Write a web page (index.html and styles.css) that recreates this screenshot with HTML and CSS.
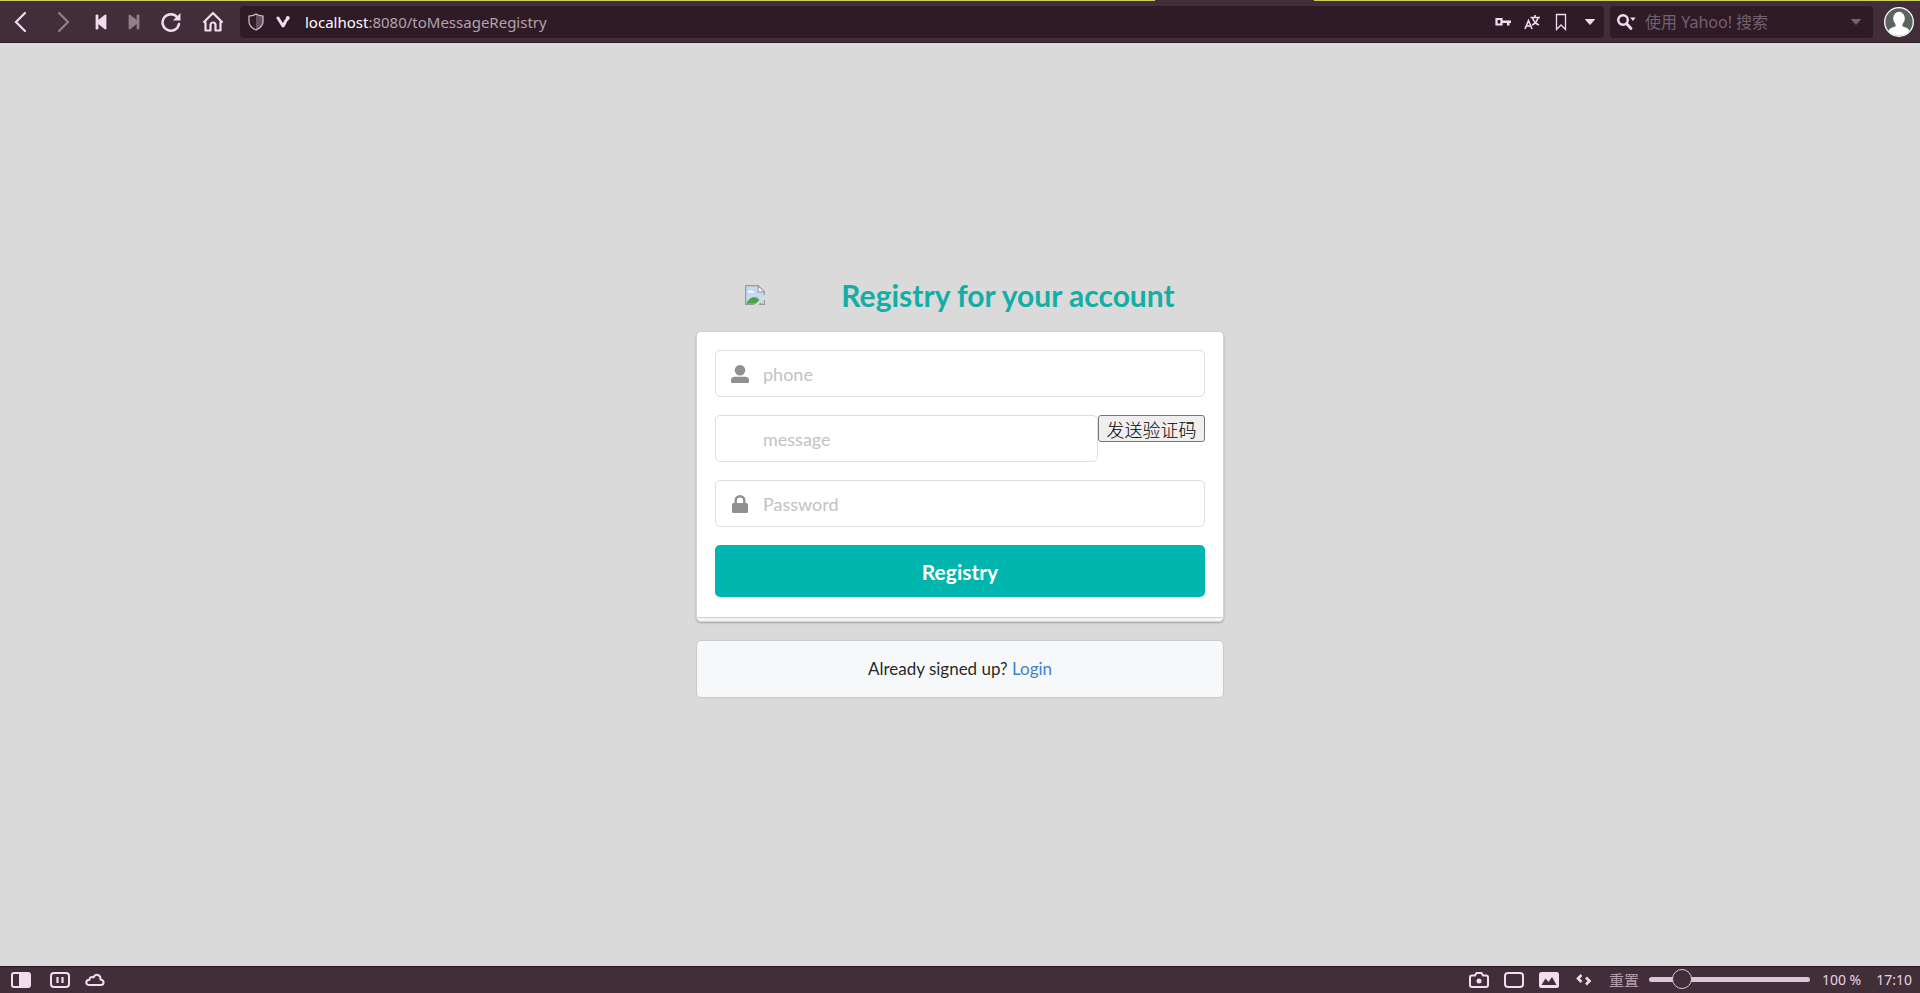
FILE: index.html
```html
<!DOCTYPE html>
<html lang="zh-CN">
<head>
  <meta charset="UTF-8"/>
  <meta name="viewport" content="width=device-width, initial-scale=1.0"/>
  <title>Registry</title>
  <link rel="stylesheet" href="styles.css">
</head>
<body>

  <!-- Browser toolbar -->
  <div class="tab-line"><span class="tab-active"></span></div>
  <header class="toolbar">
    <nav class="nav-buttons">
      <button class="nav-btn" type="button" aria-label="Back">
        <svg width="22" height="22" viewBox="0 0 22 22"><path d="M15 2 6 11l9 9" fill="none" stroke="currentColor" stroke-width="2.2" stroke-linecap="round"/></svg>
      </button>
      <button class="nav-btn dim" type="button" aria-label="Forward">
        <svg width="22" height="22" viewBox="0 0 22 22"><path d="m7 2 9 9-9 9" fill="none" stroke="currentColor" stroke-width="2.2" stroke-linecap="round"/></svg>
      </button>
      <button class="nav-btn narrow" type="button" aria-label="Rewind">
        <svg width="12" height="16" viewBox="0 0 12 16"><path d="M1 1h2v5.6L10 1h1v14h-1L3 9.4V15H1z" fill="currentColor" stroke="currentColor" stroke-width=".8" stroke-linejoin="round"/></svg>
      </button>
      <button class="nav-btn narrow dim" type="button" aria-label="Fast forward">
        <svg width="12" height="16" viewBox="0 0 12 16"><path d="M11 1H9v5.6L2 1H1v14h1l7-5.600V15h2z" fill="currentColor" stroke="currentColor" stroke-width=".8" stroke-linejoin="round"/></svg>
      </button>
      <button class="nav-btn" type="button" aria-label="Reload">
        <svg width="22" height="22" viewBox="0 0 22 22"><path d="M17.500 6.500A8.300 8.300 0 1 0 19 13" fill="none" stroke="currentColor" stroke-width="2.500" stroke-linecap="round"/><path d="M20.500 2v7.500H13z" fill="currentColor"/></svg>
      </button>
      <button class="nav-btn" type="button" aria-label="Home">
        <svg width="22" height="22" viewBox="0 0 22 22"><path d="m2 11 9-9 9 9h-1.500v8.500h-5V14a2.500 2.500 0 0 0-5 0v5.500h-5V11z" fill="none" stroke="currentColor" stroke-width="2.200" stroke-linejoin="round"/></svg>
      </button>
    </nav>

    <div class="address-bar">
      <svg class="shield" width="16" height="18" viewBox="0 0 16 18"><path d="M8 1c2 1.200 4 2 7 2v6c0 3.500-3 6-7 8z" fill="#655260"/><path d="M8 1c2 1.200 4 2 7 2v6c0 3.500-3 6-7 8-4-2-7-4.500-7-8V3c3 0 5-.8 7-2z" fill="none" stroke="#d9c3d4" stroke-width="1.200"/></svg>
      <svg class="vivaldi" width="14" height="14" viewBox="0 0 14 14"><path d="m2 3 5 8c2-2.500 2-5.500 4.500-7" fill="none" stroke="currentColor" stroke-width="3" stroke-linecap="round" stroke-linejoin="round"/><circle cx="11.800" cy="2.800" r="1.900" fill="currentColor"/></svg>
      <div class="url"><b>localhost</b>:8080/toMessageRegistry</div>
      <div class="address-icons">
        <svg width="16" height="10" viewBox="0 0 16 10"><path d="M1.500 2h5v5.500h-5z" fill="none" stroke="currentColor" stroke-width="2.200"/><path d="M7 3.500h9v2.500h-1.500v2.500H12V6H7z" fill="currentColor"/></svg>
        <svg width="16" height="16" viewBox="0 0 16 16"><path d="M1 15 4.500 6.500 8 15M2.300 12h4.500M6.500 3.500H16M11 1v2.500M8.500 3.500c1 4 3 6 6.500 7.500M14 3.500c-.8 4-3 6.300-6 7.500" fill="none" stroke="currentColor" stroke-width="1.600"/></svg>
        <svg width="16" height="18" viewBox="0 0 16 18"><path d="M3.500 1.500h9v15L8 12l-4.500 4.500z" fill="none" stroke="currentColor" stroke-width="1.300"/></svg>
        <svg width="16" height="10" viewBox="0 0 16 10"><path d="M3.500 2.500h9L8 7.500z" fill="currentColor" stroke="currentColor" stroke-linejoin="round"/></svg>
      </div>
    </div>

    <div class="search-bar">
      <svg width="20" height="18" viewBox="0 0 20 18"><circle cx="7" cy="7" r="4.800" fill="none" stroke="currentColor" stroke-width="2.400"/><path d="m10.500 10.500 4.500 5" stroke="currentColor" stroke-width="2.800" stroke-linecap="round"/><path d="M14 4.500h5.500L17 8z" fill="currentColor"/></svg>
      <input type="text" aria-label="Search" placeholder="使用 Yahoo! 搜索">
      <svg class="dim" width="16" height="10" viewBox="0 0 16 10"><path d="M3.500 2.500h9L8 7.500z" fill="currentColor" stroke="currentColor" stroke-linejoin="round"/></svg>
    </div>

    <button class="avatar" type="button" aria-label="Account">
      <svg width="30" height="30" viewBox="0 0 30 30"><circle cx="15" cy="15" r="14.300" fill="#5d6460" stroke="#fff" stroke-width="1.300"/><ellipse cx="15" cy="11.500" rx="5.800" ry="6.800" fill="#fff"/><path d="M4.500 24c1-3 4-3.500 7-4.500v-3h7v3c3 1 6 1.500 7 4.500A14 14 0 0 1 4.500 24z" fill="#fff"/></svg>
    </button>
  </header>

  <!-- Registry form -->
  <main class="page">
    <div class="column">
      <h2 class="title">
        <svg width="20" height="20" viewBox="0 0 16 16" role="img" aria-label="logo">
          <path d="M.5.5h10l5 5v10H.5z" fill="#c5d9f7"/>
          <path d="M2.500 6c0-2 2.500-2 3-1 1.500-.5 2 .5 1.800 1z" fill="#fff"/>
          <path d="M1 15c1-3 4-5.500 6.500-5.500S12 12 13 15z" fill="#4ba446"/>
          <path d="M16 7.500 7.500 16h3L16 11z" fill="#dadada"/>
          <path d="M10.500.5h-10v15h7M10.500.5l5 5h-5zM15.500 5.500V8M15.500 12v3.500H11" fill="none" stroke="#9a9a9a"/>
          <path d="M11 1.700V5h3.300z" fill="#fff"/>
        </svg>
        <span>Registry for your account</span>
      </h2>

      <form class="segment">
        <div class="fields">
          <div class="field">
            <svg class="field-icon" width="18" height="18" viewBox="0 0 18 18"><circle cx="9" cy="5.300" r="5.300" fill="currentColor"/><path d="M0 16.500V15c0-2 1.500-3.300 3.500-3.300h11c2 0 3.500 1.300 3.500 3.300v1.500c0 1-.6 1.500-1.500 1.500h-15C.6 18 0 17.500 0 16.500z" fill="currentColor"/></svg>
            <input type="text" name="phone" aria-label="phone" placeholder="phone">
          </div>
          <div class="field-row">
            <div class="field">
              <input type="text" name="message" aria-label="message" placeholder="message">
            </div>
            <button class="send-btn" type="button">发送验证码</button>
          </div>
          <div class="field">
            <svg class="field-icon" width="18" height="18" viewBox="0 0 18 18"><path d="M4.700 9V5.500a4.300 4.300 0 0 1 8.600 0V9" fill="none" stroke="currentColor" stroke-width="2.400"/><rect x="1" y="8" width="16" height="10" rx="1.500" fill="currentColor"/></svg>
            <input type="password" name="password" aria-label="Password" placeholder="Password">
          </div>
          <button class="submit-btn" type="button">Registry</button>
        </div>
        <div class="stack"></div>
      </form>

      <div class="message">Already signed up? <a href="#">Login</a></div>
    </div>
  </main>

  <!-- Status bar -->
  <footer class="status-bar">
    <div class="status-group">
      <button class="status-btn panel-btn" type="button" aria-label="Panel">
        <svg width="20" height="16" viewBox="0 0 20 16"><rect x="1" y="1" width="18" height="14" rx="2" fill="none" stroke="currentColor" stroke-width="2"/><path d="M8 1h11v14H8z" fill="currentColor"/></svg>
      </button>
      <button class="status-btn" type="button" aria-label="Break mode">
        <svg width="20" height="16" viewBox="0 0 20 16"><rect x="1" y="1" width="18" height="14" rx="3" fill="none" stroke="currentColor" stroke-width="2"/><path d="M7.500 5v6M12.500 5v6" stroke="currentColor" stroke-width="2.200"/></svg>
      </button>
      <button class="status-btn" type="button" aria-label="Sync">
        <svg width="20" height="16" viewBox="0 0 20 16"><path d="M4.500 13C0 13 .5 8 4.500 7.800 4.500 5 7 4.500 8.500 5.500c2-4.500 7.500-3 7 2 4 .5 4 5.500.5 5.500z" fill="none" stroke="currentColor" stroke-width="2" stroke-linejoin="round"/></svg>
      </button>
    </div>

    <div class="status-group">
      <button class="status-btn" type="button" aria-label="Capture page">
        <svg width="20" height="16" viewBox="0 0 20 16"><path d="M3 3.500h3L7.500 1h5L14 3.500h3c1.300 0 2 .7 2 2V13c0 1.300-.7 2-2 2H3c-1.300 0-2-.7-2-2V5.500c0-1.300.7-2 2-2z" fill="none" stroke="currentColor" stroke-width="2"/><circle cx="10" cy="9" r="2.500" fill="currentColor"/></svg>
      </button>
      <button class="status-btn" type="button" aria-label="Tiling">
        <svg width="20" height="16" viewBox="0 0 20 16"><rect x="1" y="1" width="18" height="14" rx="3" fill="none" stroke="currentColor" stroke-width="2"/></svg>
      </button>
      <button class="status-btn" type="button" aria-label="Images">
        <svg width="20" height="16" viewBox="0 0 20 16"><rect width="20" height="16" rx="2.500" fill="currentColor"/><path d="m2.500 13 4-6.500 3 3.500L13 5l4.500 8z" fill="#422e39"/></svg>
      </button>
      <button class="status-btn" type="button" aria-label="Page actions">
        <svg width="20" height="16" viewBox="0 0 20 16"><path d="M7.500 3 4 6.500 7.500 10M12 5.500 15.500 9 12 12.500" fill="none" stroke="currentColor" stroke-width="2.600"/></svg>
      </button>
      <button class="reset-btn" type="button">重置</button>
      <input class="zoom" type="range" min="20" max="500" value="100" aria-label="Zoom">
      <span class="zoom-value">100 %</span>
      <span class="clock">17:10</span>
    </div>
  </footer>

</body>
</html>
```
FILE: styles.css
```css
* {
  box-sizing: border-box;
}

body {
  margin: 0;
  min-height: 100vh;
  display: flex;
  flex-direction: column;
  background-color: #dadada;
  font-family: Lato, "Noto Sans CJK SC", sans-serif;
  font-size: 18px;
}

button {
  font-family: inherit;
  cursor: pointer;
}

svg {
  display: block;
  flex-shrink: 0;
}

/* Browser toolbar */
.tab-line {
  height: 1px;
  background-color: #c9d060;
  display: grid;
  grid-template-columns: 1155fr 159fr 606fr;
}

.tab-active {
  grid-column: 2;
  background-color: #422e39;
}

.toolbar {
  height: 42px;
  display: flex;
  align-items: center;
  background-color: #422e39;
  border-bottom: 1px solid #2b1922;
  color: #f3dcf0;
  font-family: "Noto Sans", "Noto Sans CJK SC", sans-serif;
  font-size: 15px;
}

.nav-buttons {
  display: flex;
}

.nav-btn {
  width: 42px;
  height: 32px;
  padding: 0;
  display: flex;
  align-items: center;
  justify-content: center;
  background: none;
  border: none;
  color: #f3dcf0;
}

.nav-btn.narrow {
  width: 33px;
}

.nav-btn.dim {
  color: #927d8b;
}

.address-bar, .search-bar {
  height: 32px;
  display: flex;
  align-items: center;
  background-color: #2e1b25;
  border-radius: 4px;
}

.address-bar {
  flex: 1;
  margin-left: 6px;
  padding: 0 6px 0 8px;
}

.vivaldi {
  margin-left: 12px;
}

.url {
  flex: 1;
  margin-left: 15px;
  color: #b5a0af;
}

.url b {
  font-weight: normal;
  color: #ffffff;
}

.address-icons {
  display: flex;
  align-items: center;
  gap: 13px;
}

.search-bar {
  width: 263px;
  margin-left: 6px;
  padding: 0 9px 0 6px;
}

.search-bar input {
  flex: 1;
  min-width: 0;
  margin-left: 9px;
  padding: 0;
  background: none;
  border: none;
  outline: none;
  color: #f3dcf0;
  font-family: inherit;
  font-size: 16px;
}

.search-bar input::placeholder, .search-bar .dim {
  color: #746070;
}

.avatar {
  margin: 0 6px 0 11px;
  padding: 0;
  background: none;
  border: none;
}

/* Registry form */
.page {
  flex: 1;
  display: flex;
  align-items: center;
  justify-content: center;
  padding-bottom: 36px;
}

.column {
  width: 100%;
  max-width: 528px;
}

.title {
  display: flex;
  align-items: center;
  justify-content: center;
  gap: 76px;
  margin: 0 0 16px;
  font-size: 30px;
  line-height: 40px;
  color: #13aea6;
}

.segment {
  border: 1px solid #d4d4d5;
  border-radius: 5px;
  background-color: #ffffff;
  box-shadow: 0 1px 2px rgba(34, 36, 38, 0.3);
}

.fields {
  display: flex;
  flex-direction: column;
  gap: 18px;
  padding: 18px 18px 20px;
}

.field {
  flex: 1;
  height: 47px;
  display: flex;
  align-items: center;
  position: relative;
}

.field-row {
  display: flex;
  align-items: flex-start;
}

.field-icon {
  position: absolute;
  left: 16px;
  color: #909090;
}

.field input {
  width: 100%;
  height: 47px;
  padding: 0 18px 0 47px;
  border: 1px solid #dededf;
  border-radius: 5px;
  outline: none;
  background-color: #ffffff;
  color: rgba(0, 0, 0, 0.87);
  font-family: inherit;
  font-size: 18px;
}

.field input:focus {
  border-color: #85b7d9;
}

.field input::placeholder {
  color: #c2c2c2;
}

.send-btn {
  width: 107px;
  height: 27px;
  padding: 0;
  border: 1px solid #767676;
  border-radius: 3px;
  background-color: #efefef;
  color: #000000;
  font-family: "Noto Sans CJK SC", sans-serif;
  font-size: 18px;
  font-weight: 300;
  line-height: 24px;
}

.submit-btn {
  height: 52px;
  border: none;
  border-radius: 5px;
  background-color: #00b5ad;
  color: #ffffff;
  font-size: 21px;
  font-weight: bold;
}

.submit-btn:hover {
  background-color: #009c95;
}

.stack {
  height: 4px;
  border-top: 1px solid #d0d0d1;
  border-radius: 0 0 4px 4px;
  background-color: #f3f3f3;
}

.message {
  margin-top: 18px;
  padding: 16px;
  border: 1px solid #c9cacb;
  border-radius: 5px;
  background-color: #f7f8fa;
  color: rgba(0, 0, 0, 0.87);
  font-size: 17px;
  line-height: 24px;
  text-align: center;
}

.message a {
  color: #4183c4;
  text-decoration: none;
}

/* Status bar */
.status-bar {
  height: 27px;
  display: flex;
  align-items: center;
  justify-content: space-between;
  padding: 0 8px 1px 11px;
  background-color: #422e39;
  border-top: 1px solid #2b1922;
  color: #e8d2e3;
  font-family: "Noto Sans", "Noto Sans CJK SC", sans-serif;
  font-size: 14px;
}

.status-group {
  display: flex;
  align-items: center;
  gap: 15px;
}

.status-btn, .reset-btn {
  padding: 0;
  background: none;
  border: none;
  color: #f3dcf0;
}

.panel-btn {
  margin-right: 4px;
}

.reset-btn {
  color: #b5a0af;
  font-size: 15px;
  line-height: 20px;
}

.zoom {
  appearance: none;
  width: 161px;
  height: 20px;
  margin: 0 -3px 0 -5px;
  background: none;
}

.zoom::-webkit-slider-runnable-track {
  height: 5px;
  border-radius: 3px;
  background-color: #dcc5d7;
}

.zoom::-webkit-slider-thumb {
  appearance: none;
  width: 20px;
  height: 20px;
  margin-top: -8px;
  border: 1px solid #dcc5d7;
  border-radius: 50%;
  background-color: #422e39;
}
```
